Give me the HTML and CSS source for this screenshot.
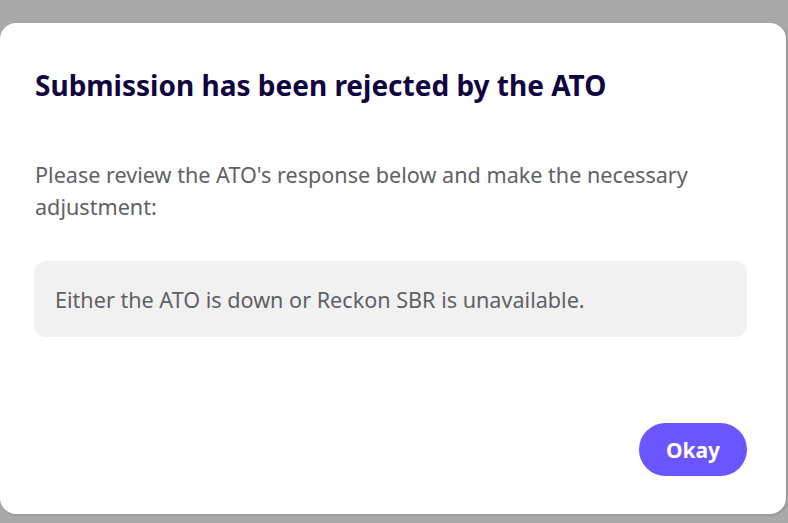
FILE: index.html
```html
<!DOCTYPE html>
<html lang="en">
<head>
<meta charset="utf-8">
<title>Submission rejected</title>
<link rel="stylesheet" href="styles.css">
</head>
<body>
  <div class="modal">
    <h1 class="title">Submission has been rejected by the ATO</h1>
    <p class="desc">Please review the ATO's response below and make the necessary adjustment:</p>
    <div class="response">Either the ATO is down or Reckon SBR is unavailable.</div>
    <div class="actions">
      <button class="btn">Okay</button>
    </div>
  </div>
</body>
</html>
```
FILE: styles.css
```css
html, body {
  margin: 0;
  padding: 0;
}
body {
  background: #a9a9a9;
  width: 788px;
  height: 523px;
  overflow: hidden;
  font-family: "Noto Sans", "Open Sans", sans-serif;
}
.modal {
  box-sizing: border-box;
  margin-top: 23px;
  width: 786px;
  height: 491px;
  background: #fff;
  border-radius: 16px;
  padding: 46px 39px 38px 34px;
  display: flex;
  flex-direction: column;
  box-shadow: 1px 1px 3px rgba(0,0,0,0.15);
}
.title {
  margin: 0 0 0 1px;
  font-size: 28px;
  line-height: 32px;
  font-weight: 700;
  color: #10053f;
}
.desc {
  margin: 58px 0 0 1px;
  font-size: 21.6px;
  line-height: 32px;
  color: #5f6166;
}
.response {
  margin-top: 38px;
  height: 76px;
  box-sizing: border-box;
  background: #f1f1f1;
  border-radius: 12px;
  padding: 0 21px;
  display: flex;
  align-items: center;
  font-size: 21.6px;
  color: #5f6166;
}
.actions {
  margin-top: auto;
  display: flex;
  justify-content: flex-end;
}
.btn {
  width: 108px;
  height: 53px;
  border: none;
  border-radius: 27px;
  background: #6b55ff;
  color: #fff;
  font-family: inherit;
  font-size: 21px;
  font-weight: 700;
  cursor: pointer;
}
```
